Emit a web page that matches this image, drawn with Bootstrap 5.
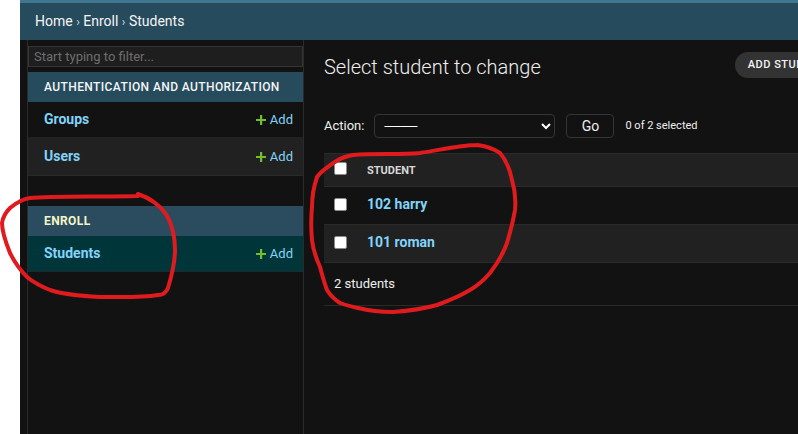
<!DOCTYPE html>
<html lang="en">
<head>
<meta charset="utf-8">
<title>Select student to change</title>
<link href="https://cdn.jsdelivr.net/npm/bootstrap@5.3.0/dist/css/bootstrap.min.css" rel="stylesheet">
<script src="https://cdn.jsdelivr.net/npm/bootstrap@5.3.0/dist/js/bootstrap.bundle.min.js"></script>
<style>
html, body { height: 100%; overflow: hidden; }
body { background: #fff; font-family: Roboto, "Liberation Sans", sans-serif; font-size: 14px; color: #f5dd5d; }
.app-shell { margin-left: 20px; width: 900px; height: 434px; background: #121212; border-top: 3px solid #417690; position: relative; }
.crumbs { height: 37px; background: #264b5d; color: #f5f5f5; padding-left: 15px; font-size: 14px; line-height: 37px; }
.crumbs span { color: #c4dce8; font-size: 12px; }
.side-col { width: 277px; margin-left: 7px; height: 394px; border-left: 1px solid #2a2a2a; border-right: 1px solid #2a2a2a; padding-top: 6px; flex: none; }
.side-filter { display: block; width: 100%; height: 21px; background: #1e1e1e; border: 1px solid #353535; color: #eee; font-size: 13px; padding: 0 5px; margin-bottom: 5px; border-radius: 0; outline: 0; }
.side-filter::placeholder { color: #6f6f6f; opacity: 1; }
.mod-cap { height: 30px; line-height: 30px; background: #264b5d; color: #f5f5f5; font-size: 12px; font-weight: 500; letter-spacing: .4px; padding-left: 16px; white-space: nowrap; }
.mod-cap.active-cap { color: #f5f5c8; background: #2b4c5e; font-weight: 700; margin-top: 30px; }
.mod-row { padding: 0 10px 0 16px; border-bottom: 1px solid #222; }
.mod-row.h-a { height: 36px; }
.mod-row.h-b { height: 38px; background: #212121; border-bottom-color: #2a2a2a; }
.mod-row.cur { height: 36px; background: #00363a; border-bottom-color: #1a2c2e; }
.mod-row a { color: #81d4fa; text-decoration: none; font-size: 14px; font-weight: 700; }
.mod-row a.add-link { font-weight: 400; font-size: 13px; display: flex; align-items: center; gap: 4px; }
.main-col { padding: 0 0 0 20px; flex: 1; }
.title-row { height: 56px; padding-top: 15px; }
.page-title { font-size: 20px; font-weight: 300; color: #eee; margin: 0; }
.pill-add { margin: -3px 0 0 194px; width: 140px; height: 26px; line-height: 26px; border-radius: 13px; background: #333; color: #f5f5f5; font-size: 11px; font-weight: 500; letter-spacing: .5px; padding-left: 13px; white-space: nowrap; flex: none; }
.action-row { margin-top: 18px; height: 24px; color: #eee; font-size: 13px; }
.act-select { width: 181px; height: 24px; margin-left: 10px; background-color: #121212; color: #fff; border: 1px solid #353535; border-radius: 4px; font-size: 13px; letter-spacing: -2px; font-family: Roboto, sans-serif; padding: 0 0 0 4px; }
.go-btn { width: 48px; height: 24px; margin-left: 11px; padding: 0; background: #121212; color: #eee; border: 1px solid #353535; border-radius: 4px; font-size: 14px; line-height: 22px; }
.sel-count { margin-left: 11px; font-size: 11px; color: #eee; }
.res-head { margin-top: 15px; height: 34px; background: #212121; border-top: 1px solid #2a2a2a; border-bottom: 1px solid #2a2a2a; color: #d8d8d8; font-size: 11px; font-weight: 700; }
.res-row { height: 38px; padding-bottom: 2px; border-bottom: 1px solid #2a2a2a; }
.res-row.alt { background: #212121; }
.res-row a { color: #81d4fa; font-size: 14px; font-weight: 700; text-decoration: none; }
.res-check { appearance: none; background: #fff; border: 1px solid #8a8a8a; border-radius: 2px; width: 13px; height: 13px; margin: 0 0 0 10px; flex: none; }
.res-head .res-check { margin-top: -3px; }
.res-head .res-cell { padding-top: 3px; }
.res-cell { margin-left: 20px; }
.res-foot { height: 43px; line-height: 41px; padding-left: 10px; color: #eee; font-size: 13px; border-bottom: 1px solid #2a2a2a; }
.scribble { position: absolute; left: 0; top: 0; pointer-events: none; overflow: visible; }
</style>
</head>
<body>
<div class="app-shell">
    <div class="crumbs">Home <span>›</span> Enroll <span>›</span> Students</div>
    <div class="d-flex">
        <div class="side-col">
            <input type="text" class="side-filter" placeholder="Start typing to filter...">
            <div class="mod-cap">AUTHENTICATION AND AUTHORIZATION</div>
            <div class="mod-row h-a d-flex justify-content-between align-items-center">
                <a href="#">Groups</a>
                <a href="#" class="add-link"><svg width="10" height="10" viewBox="0 0 10 10"><path d="M4 0h2.2v3.9H10v2.2H6.2V10H4V6.1H0V3.9h4z" fill="#70bf2b"/></svg>Add</a>
            </div>
            <div class="mod-row h-b d-flex justify-content-between align-items-center">
                <a href="#">Users</a>
                <a href="#" class="add-link"><svg width="10" height="10" viewBox="0 0 10 10"><path d="M4 0h2.2v3.9H10v2.2H6.2V10H4V6.1H0V3.9h4z" fill="#70bf2b"/></svg>Add</a>
            </div>
            <div class="mod-cap active-cap">ENROLL</div>
            <div class="mod-row cur d-flex justify-content-between align-items-center">
                <a href="#">Students</a>
                <a href="#" class="add-link"><svg width="10" height="10" viewBox="0 0 10 10"><path d="M4 0h2.2v3.9H10v2.2H6.2V10H4V6.1H0V3.9h4z" fill="#70bf2b"/></svg>Add</a>
            </div>
        </div>
        <div class="main-col">
            <div class="title-row d-flex align-items-start">
                <h1 class="page-title text-nowrap">Select student to change</h1>
                <div class="pill-add">ADD STUDENT</div>
            </div>
            <div class="action-row d-flex align-items-center">
                <span>Action:</span>
                <select class="act-select"><option>————</option></select>
                <button type="button" class="go-btn">Go</button>
                <span class="sel-count">0 of 2 selected</span>
            </div>
            <div class="res-head d-flex align-items-center">
                <input type="checkbox" class="res-check">
                <span class="res-cell">STUDENT</span>
            </div>
            <div class="res-row d-flex align-items-center">
                <input type="checkbox" class="res-check">
                <a href="#" class="res-cell">102 harry</a>
            </div>
            <div class="res-row alt d-flex align-items-center">
                <input type="checkbox" class="res-check">
                <a href="#" class="res-cell">101 roman</a>
            </div>
            <div class="res-foot">2 students</div>
        </div>
    </div>
    <svg class="scribble" width="798" height="434" viewBox="20 3 798 434" fill="none" stroke="#e01b1e" stroke-width="4" stroke-linecap="round" stroke-linejoin="round">
        <path d="M138 194C150 198 160 206 166 214C172 224 175 238 175 250C175 264 171 278 168 288C166 293 163 295 158 295C140 298 118 297 100 297C80 296 62 294 50 290C40 286 33 282 27 277C20 270 14 261 10 253C6 243 2 232 2 223C3 216 6 212 10 208C16 203 23 199 30 198C50 196 100 197 138 196"/>
        <path d="M477 145C486 146 494 149 500 153C506 160 510 170 512 180C515 190 516 200 515 210C513 222 510 233 507 243C503 254 497 264 490 273C484 280 477 286 470 290C460 296 448 301 437 305C423 309 408 311 393 312C380 312 370 311 358 308C350 306 345 305 340 303C334 299 330 295 327 290C324 282 322 274 320 267C316 258 313 249 312 240C311 229 311 218 312 207C312 196 314 186 317 177C322 170 330 165 338 160C343 157 348 156 353 155C375 153 400 155 420 153C440 150 460 145 477 145"/>
    </svg>
</div>
</body>
</html>
